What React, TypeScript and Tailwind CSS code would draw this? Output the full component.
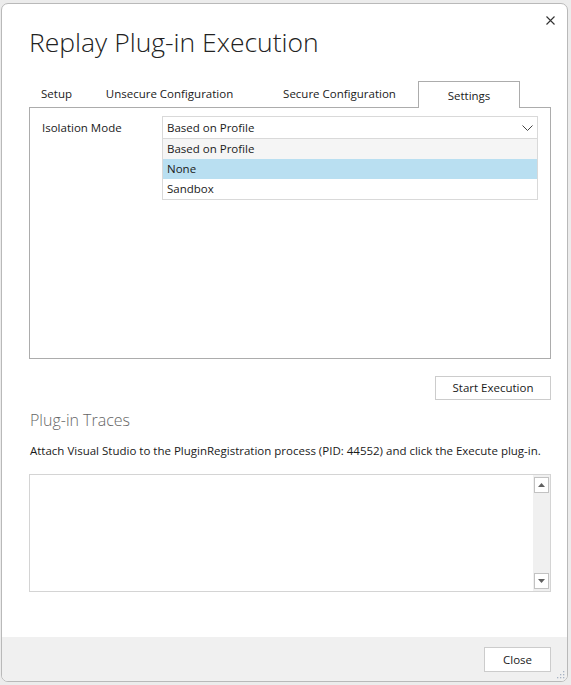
import React from 'react';

const font = { fontFamily: '"Open Sans", "Noto Sans", sans-serif' };

function ScrollButton({ dir }: { dir: 'up' | 'down' }) {
  return (
    <div className="w-[15px] h-[16px] border border-[#c2c2c2] bg-white flex items-center justify-center">
      <svg width="7" height="4" viewBox="0 0 7 4">
        {dir === 'up' ? <path d="M0 4 L3.5 0 L7 4 Z" fill="#606060" /> : <path d="M0 0 L3.5 4 L7 0 Z" fill="#606060" />}
      </svg>
    </div>
  );
}

export default function App() {
  return (
    <div className="w-[571px] h-[685px] bg-[#ececec] pt-[3px] pl-[1px] overflow-hidden" style={font}>
      <div className="relative w-[567px] h-[679px] bg-white border border-[#b9b9b9] rounded-[7px] flex flex-col overflow-hidden text-[11.5px] text-[#1a1a1a]">
        <button className="absolute right-[9px] top-[8px] w-[16px] h-[16px] flex items-center justify-center">
          <svg width="9" height="9" viewBox="0 0 9 9">
            <path d="M0.5 0.5 L8.5 8.5 M8.5 0.5 L0.5 8.5" stroke="#333" strokeWidth="1.1" />
          </svg>
        </button>

        <div className="pl-[27px] pt-[20px] flex-1">
          <h1 className="text-[26.5px] font-light leading-[36px] text-[#222]">Replay Plug-in Execution</h1>

          <div className="mt-[21px] w-[522px]">
            <div className="flex h-[26px] items-end relative z-10">
              <div className="w-[55px] h-[25px] flex items-center justify-center pb-[1px]">Setup</div>
              <div className="w-[171px] h-[25px] flex items-center justify-center pb-[1px]">Unsecure Configuration</div>
              <div className="w-[6px]" />
              <div className="w-[157px] h-[25px] flex items-center justify-center pb-[1px]">Secure Configuration</div>
              <div className="w-[102px] border border-b-0 border-[#acacac] bg-white flex items-center justify-center pt-[2px] -mb-[1px] h-[27px]">
                Settings
              </div>
            </div>
            <div className="h-[252px] border border-[#acacac] pt-[8px] pl-[12px] pr-[12px]">
              <div className="flex">
                <div className="w-[120px] h-[23px] flex items-center">Isolation Mode</div>
                <div className="flex-1">
                  <div className="h-[23px] border border-[#d9d9d9] flex items-center justify-between pl-[4px] pr-[4px]">
                    <span>Based on Profile</span>
                    <svg width="11" height="6" viewBox="0 0 11 6">
                      <path d="M0.5 0.5 L5.5 5.5 L10.5 0.5" stroke="#444" strokeWidth="1" fill="none" />
                    </svg>
                  </div>
                  <div className="border border-t-0 border-[#d9d9d9]">
                    <div className="h-[20px] bg-[#f5f5f5] flex items-center pl-[4px]">Based on Profile</div>
                    <div className="h-[20px] bg-[#b9dff1] flex items-center pl-[4px]">None</div>
                    <div className="h-[20px] flex items-center pl-[4px]">Sandbox</div>
                  </div>
                </div>
              </div>
            </div>

            <div className="flex justify-end mt-[17px]">
              <button className="w-[116px] h-[24px] border border-[#cccccc] bg-white">Start Execution</button>
            </div>

            <div className="mt-[9px] text-[16px] font-light text-[#666] leading-[22px] pl-[1px]">Plug-in Traces</div>
            <div className="mt-[11px] leading-[18px] pl-[1px]">
              Attach Visual Studio to the PluginRegistration process (PID: 44552) and click the Execute plug-in.
            </div>

            <div className="mt-[14px] h-[118px] border border-[#d4d4d4] flex justify-end">
              <div className="w-[17px] bg-[#f0f0f0] flex flex-col justify-between items-center py-[2px]">
                <ScrollButton dir="up" />
                <ScrollButton dir="down" />
              </div>
            </div>
          </div>
        </div>

        <div className="h-[44px] bg-[#f0f0f0] flex justify-end items-start pt-[10px] pr-[16px] relative">
          <button className="w-[67px] h-[25px] border border-[#cccccc] bg-white">Close</button>
          <svg className="absolute right-[2px] bottom-[2px]" width="10" height="10" viewBox="0 0 10 10">
            {[
              [8, 2], [8, 5], [5, 5], [8, 8], [5, 8], [2, 8],
            ].map(([x, y]) => (
              <rect key={`${x}-${y}`} x={x} y={y} width="1.3" height="1.3" fill="#a8b4c4" />
            ))}
          </svg>
        </div>
      </div>
    </div>
  );
}
